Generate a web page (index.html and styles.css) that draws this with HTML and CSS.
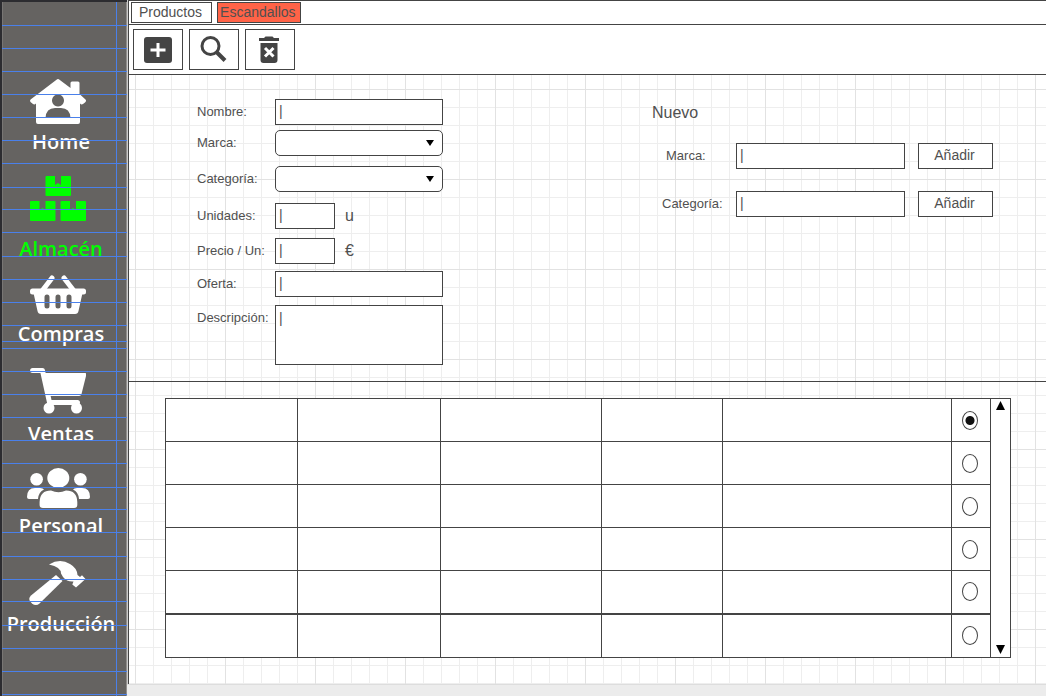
FILE: index.html
```html
<!DOCTYPE html>
<html lang="es">
<head>
<meta charset="utf-8">
<meta name="viewport" content="width=device-width, initial-scale=1">
<title>Almacén</title>
<link rel="stylesheet" href="styles.css">
</head>
<body>
<nav class="sidebar">
  <a class="nav-item nav-home" href="#">
    <svg width="56" height="45" viewBox="0 0 56 45"><path d="M26.500.7Q28-.6 29.500.7L40.500 9V4Q40.500 2.500 42 2.500H48Q49.500 2.500 49.500 4V15L55.500 20.500Q56.800 22 55 23.500L53 25Q51.500 26 50 24.500V43Q50 45 48 45H8Q6 45 6 43V24.500Q4.500 26 3 25L.8 23.200Q-.6 22 .6 20.500Z"/><path class="cut" d="M28 15.500a6 6 0 1 0 .01 0ZM15.500 39Q16 29 25 29H31Q40 29 40.500 39Z"/></svg>
    <span>Home</span>
  </a>
  <a class="nav-item nav-stock active" href="#">
    <svg width="56" height="45" viewBox="0 0 56 45"><path id="box" d="M16.500 0H25V9L28 7L31 9V0H40Q41 0 41 1V19Q41 20 40 20H16.500Q15.500 20 15.500 19V1Q15.500 0 16.500 0Z"/><use href="#box" x="-15.500" y="25"/><use href="#box" x="15" y="25"/></svg>
    <span>Almacén</span>
  </a>
  <a class="nav-item nav-shop" href="#">
    <svg width="56" height="39" viewBox="0 0 56 39"><path class="stroke" d="M22 3L12 16M34 3L44 16"/><rect y="13.500" width="56" height="6" rx="2.500"/><path d="M3.500 18H52.500L48.500 36Q48 39 45 39H11Q8 39 7.500 36Z"/><path class="cut-stroke" d="M17 22V31M28 22V31M39 22V31"/></svg>
    <span>Compras</span>
  </a>
  <a class="nav-item nav-sales" href="#">
    <svg width="56" height="46" viewBox="0 0 56 46"><path class="stroke" d="M2.600 2.600H12.500L19.500 34.500H47.500"/><path d="M14 5H55Q57 5 56 8L51.500 26Q51 28 49 28H19Z"/><circle cx="19" cy="40" r="5.500"/><circle cx="46.500" cy="40" r="5.500"/></svg>
    <span>Ventas</span>
  </a>
  <a class="nav-item nav-staff" href="#">
    <svg width="63" height="40" viewBox="0 0 63 40"><ellipse cx="31.300" cy="10" rx="11" ry="10"/><circle cx="9.600" cy="11.300" r="6.300"/><circle cx="53.400" cy="11.300" r="6.300"/><path d="M8 20H13Q16 20 17 21.500Q11.500 24 11 31H2Q0 31 0 29Q0 20 8 20ZM55 20H50Q47 20 46 21.500Q51.500 24 52 31H61Q63 31 63 29Q63 20 55 20ZM24 22.500Q31.500 26 39 22.500Q50 22.500 50.300 34V37Q50.300 40 47 40H16Q12.600 40 12.600 37V34Q13 22.500 24 22.500Z"/></svg>
    <span>Personal</span>
  </a>
  <a class="nav-item nav-make" href="#">
    <svg width="58" height="46" viewBox="0 0 58 46"><path d="M27 15L33.500 21L10.500 43.500Q7 46.500 3 43.500Q-2 39.500 2 35.500Z"/><path d="M20 4.500Q31-2 41 4Q48 8 48.500 15L51 17L53 15.300L56.500 19L47 27.500L43.300 24.500L44.500 21.500Q38 22 34 17L32 13.500Q32 7 20 4.500Z"/></svg>
    <span>Producción</span>
  </a>
  <svg class="guides" width="127" height="696" viewBox="0 0 127 696" aria-hidden="true"><path d="M0 25.500H127M0 48.500H127M0 71.500H127M0 94.500H127M0 117.500H127M0 140.500H127M0 163.500H127M0 187.500H127M0 209.500H127M0 232.500H127M0 256.500H127M0 279.500H127M0 302.500H127M0 325.500H127M0 341.500H127M0 348.500H127M0 371.500H127M0 394.500H127M0 417.500H127M0 440.500H127M0 463.500H127M0 487.500H127M0 509.500H127M0 532.500H127M0 556.500H127M0 579.500H127M0 601.500H127M0 625.500H127M0 648.500H127M0 671.500H127M0 694.500H127M116.500 0V696"/></svg>
</nav>

<div class="workspace">
  <main class="content">
    <div class="tabs">
      <button class="tab" type="button">Productos</button>
      <button class="tab tab-selected" type="button">Escandallos</button>
    </div>
    <div class="toolbar">
      <button class="tool" type="button" aria-label="Agregar"><svg width="28" height="28" viewBox="0 0 28 28"><rect y="1" width="28" height="26" rx="3"/><path class="plus" d="M14 7V21M6.500 14H21.500"/></svg></button>
      <button class="tool" type="button" aria-label="Buscar"><svg width="28" height="28" viewBox="0 0 28 28"><ellipse class="lens" cx="10.500" cy="10" rx="8.500" ry="8.500"/><path class="handle" d="M16 15.500L25 24.500"/></svg></button>
      <button class="tool" type="button" aria-label="Eliminar"><svg width="28" height="28" viewBox="0 0 28 28"><path d="M3 2H8L9.500.5H16.500L18 2H23V5H3ZM4.500 7H21.500V24Q21.500 27 18.500 27H7.500Q4.500 27 4.500 24Z"/><path class="cross" d="M9 12L17.500 20.500M17.500 12L9 20.500"/></svg></button>
    </div>

    <div class="forms">
      <form class="product-form">
        <label for="nombre">Nombre:</label>
        <input class="field" id="nombre" type="text" value="|">
        <label for="marca">Marca:</label>
        <div class="select-wrap"><select class="field" id="marca"><option></option></select></div>
        <label for="categoria">Categoría:</label>
        <div class="select-wrap"><select class="field" id="categoria"><option></option></select></div>
        <label for="unidades">Unidades:</label>
        <div class="with-unit"><input class="field" id="unidades" type="text" value="|"><span>u</span></div>
        <label for="precio">Precio / Un:</label>
        <div class="with-unit"><input class="field" id="precio" type="text" value="|"><span>€</span></div>
        <label for="oferta">Oferta:</label>
        <input class="field" id="oferta" type="text" value="|">
        <label for="descripcion">Descripción:</label>
        <textarea class="field" id="descripcion">|</textarea>
      </form>
      <form class="new-form">
        <h2>Nuevo</h2>
        <div class="new-row">
          <label class="inset" for="nueva-marca">Marca:</label>
          <input class="field" id="nueva-marca" type="text" value="|">
          <button class="add" type="button">Añadir</button>
        </div>
        <div class="new-row">
          <label for="nueva-categoria">Categoría:</label>
          <input class="field" id="nueva-categoria" type="text" value="|">
          <button class="add" type="button">Añadir</button>
        </div>
      </form>
    </div>

    <div class="listing">
      <table class="items">
        <colgroup><col class="c1"><col class="c2"><col class="c3"><col class="c4"><col><col class="c6"></colgroup>
        <tbody>
          <tr><td></td><td></td><td></td><td></td><td></td><td><input type="radio" name="fila" aria-label="Fila 1" checked></td></tr>
          <tr><td></td><td></td><td></td><td></td><td></td><td><input type="radio" name="fila" aria-label="Fila 2"></td></tr>
          <tr><td></td><td></td><td></td><td></td><td></td><td><input type="radio" name="fila" aria-label="Fila 3"></td></tr>
          <tr><td></td><td></td><td></td><td></td><td></td><td><input type="radio" name="fila" aria-label="Fila 4"></td></tr>
          <tr><td></td><td></td><td></td><td></td><td></td><td><input type="radio" name="fila" aria-label="Fila 5"></td></tr>
          <tr class="last"><td></td><td></td><td></td><td></td><td></td><td><input type="radio" name="fila" aria-label="Fila 6"></td></tr>
        </tbody>
      </table>
      <div class="scroller">
        <button type="button" aria-label="Subir"><svg width="9" height="9" viewBox="0 0 9 9"><path d="M4.500 0L9 9H0Z"/></svg></button>
        <button type="button" aria-label="Bajar"><svg width="9" height="9" viewBox="0 0 9 9"><path d="M0 0H9L4.500 9Z"/></svg></button>
      </div>
    </div>
  </main>
  <footer class="statusbar"></footer>
</div>
</body>
</html>
```
FILE: styles.css
```css
* {
  box-sizing: border-box;
}

body {
  margin: 0;
  min-height: 100vh;
  display: flex;
  font-family: "Liberation Sans", Arial, sans-serif;
  font-size: 14px;
  color: #505050;
  background: #fff;
}

button,
input,
select,
textarea {
  font: inherit;
  color: inherit;
  margin: 0;
}

button {
  padding: 0;
  border: 1px solid #444;
  background: #fff;
}

svg {
  display: block;
  flex: none;
}

/* Sidebar */
.sidebar {
  position: relative;
  flex: none;
  width: 127px;
  padding-top: 77px;
  display: flex;
  flex-direction: column;
  overflow: hidden;
  background: #656361;
  border-top: 2px solid #2c2c30;
  border-left: 2px solid #2c2c30;
  box-shadow: inset 1px 0 #787674, inset -1px 0 #92908e;
}

.nav-item {
  display: flex;
  flex-direction: column;
  align-items: center;
  gap: 4px;
  width: 112px;
  margin-bottom: 20px;
  color: #fff;
  font-family: "Open Sans", "Noto Sans", sans-serif;
  font-size: 20px;
  font-weight: 600;
  line-height: 28px;
  text-decoration: none;
}

.nav-item svg {
  fill: currentColor;
}

.nav-item span {
  padding-left: 6px;
  white-space: nowrap;
}

.nav-stock {
  gap: 14px;
  margin-bottom: 12px;
}

.nav-shop,
.nav-sales {
  gap: 6px;
}

.active {
  color: #0f0;
}

.nav-item .cut {
  fill: #656361;
}

.stroke,
.cut-stroke {
  fill: none;
  stroke: currentColor;
  stroke-width: 5;
  stroke-linecap: round;
  stroke-linejoin: round;
}

.cut-stroke {
  stroke: #656361;
}

.guides {
  position: absolute;
  top: -2px;
  left: -2px;
  fill: none;
  stroke: #4a80ea;
  stroke-width: 1;
  shape-rendering: crispEdges;
  pointer-events: none;
}

/* Workspace */
.workspace {
  flex: 1;
  min-width: 0;
  display: flex;
  flex-direction: column;
}

.content {
  flex: 1;
  margin-left: 1px;
  border-top: 1px solid #444;
  border-left: 1px solid #444;
  box-shadow: -1px 0 #ccc;
  background-color: #fff;
  background-image:
    linear-gradient(90deg, #e2e2e2 1px, transparent 1px),
    linear-gradient(#e2e2e2 1px, transparent 1px),
    linear-gradient(90deg, #eee 1px, transparent 1px),
    linear-gradient(#eee 1px, transparent 1px);
  background-size: 90px 90px, 90px 90px, 18px 18px, 18px 18px;
  background-position: 6px 88px;
}

.tabs {
  display: flex;
  gap: 5px;
  height: 24px;
  padding: 1px 2px;
  background: #fff;
  border-bottom: 1px solid #444;
}

.tab {
  height: 21px;
  padding: 0 9px 0 7px;
  line-height: 19px;
}

.tab-selected {
  padding: 0 4px 0 2px;
  background: #ff6347;
}

.toolbar {
  display: flex;
  gap: 6px;
  padding: 4px;
  background: #fff;
  border-bottom: 1px solid #444;
}

.tool {
  display: flex;
  align-items: center;
  justify-content: center;
  width: 50px;
  height: 41px;
  fill: #444;
}

.plus,
.cross,
.lens,
.handle {
  fill: none;
  stroke: #fff;
  stroke-width: 3;
}

.lens,
.handle {
  stroke: #444;
}

.handle {
  stroke-width: 4;
}

/* Forms */
.forms {
  display: flex;
  justify-content: space-between;
  padding: 24px 53px 16px 68px;
  border-bottom: 1px solid #444;
}

.forms label {
  font-size: 13px;
  line-height: 26px;
}

.product-form {
  display: grid;
  grid-template-columns: 78px 168px;
  grid-template-rows: 31px 36px 37px 35px 33px 34px auto;
  align-items: start;
}

.field {
  display: block;
  width: 100%;
  height: 26px;
  padding: 0 3px 2px;
  border: 1px solid #444;
  border-radius: 0;
  background: #fff;
  outline: 0;
}

select.field {
  appearance: none;
  border-radius: 5px;
}

textarea.field {
  height: 60px;
  padding-top: 4px;
  resize: none;
}

.select-wrap {
  display: grid;
}

.select-wrap > *,
.select-wrap::after {
  grid-area: 1 / 1;
}

.select-wrap::after {
  content: "";
  align-self: center;
  justify-self: end;
  margin-right: 9px;
  border: 4px solid transparent;
  border-top: 6px solid #000;
  border-bottom: 0;
  pointer-events: none;
}

.with-unit {
  display: flex;
  align-items: center;
  gap: 10px;
  font-size: 16px;
}

.with-unit .field {
  width: 60px;
  font-size: 14px;
}

.new-form {
  width: 341px;
}

.new-form h2 {
  margin: 4px 0 20px;
  font-size: 16px;
  font-weight: 400;
  line-height: 20px;
}

.new-row {
  display: grid;
  grid-template-columns: 61px 1fr 75px;
  column-gap: 13px;
  margin: 0 0 22px 10px;
}

.new-row .inset {
  padding-left: 4px;
}

.add {
  padding: 0 2px 2px 0;
}

/* Listing */
.listing {
  display: flex;
  padding: 16px 35px 24px 36px;
}

.items {
  flex: 1;
  table-layout: fixed;
  border-collapse: collapse;
  background: #fff;
}

.items td {
  height: 43px;
  padding: 0;
  border: 1px solid #444;
  text-align: center;
}

.items .last td {
  height: 44px;
  border-top-width: 2px;
}

.c1 {
  width: 132px;
}

.c2 {
  width: 143px;
}

.c3 {
  width: 161px;
}

.c4 {
  width: 121px;
}

.c6 {
  width: 39px;
}

.items input {
  appearance: none;
  display: block;
  width: 16px;
  height: 19px;
  margin: 0 0 0 10px;
  border: 1px solid #444;
  border-radius: 50%;
  background: #fff;
}

.items input:checked {
  background: radial-gradient(circle, #111 4px, #fff 5px);
}

.scroller {
  display: flex;
  flex-direction: column;
  justify-content: space-between;
  width: 20px;
  padding: 2px 0 3px;
  border: 1px solid #444;
  border-left: 0;
  background: #fff;
}

.scroller button {
  display: flex;
  justify-content: center;
  border: 0;
}

.statusbar {
  height: 12px;
  border-top: 1px solid #ddd;
  background: #ececec;
}
```
